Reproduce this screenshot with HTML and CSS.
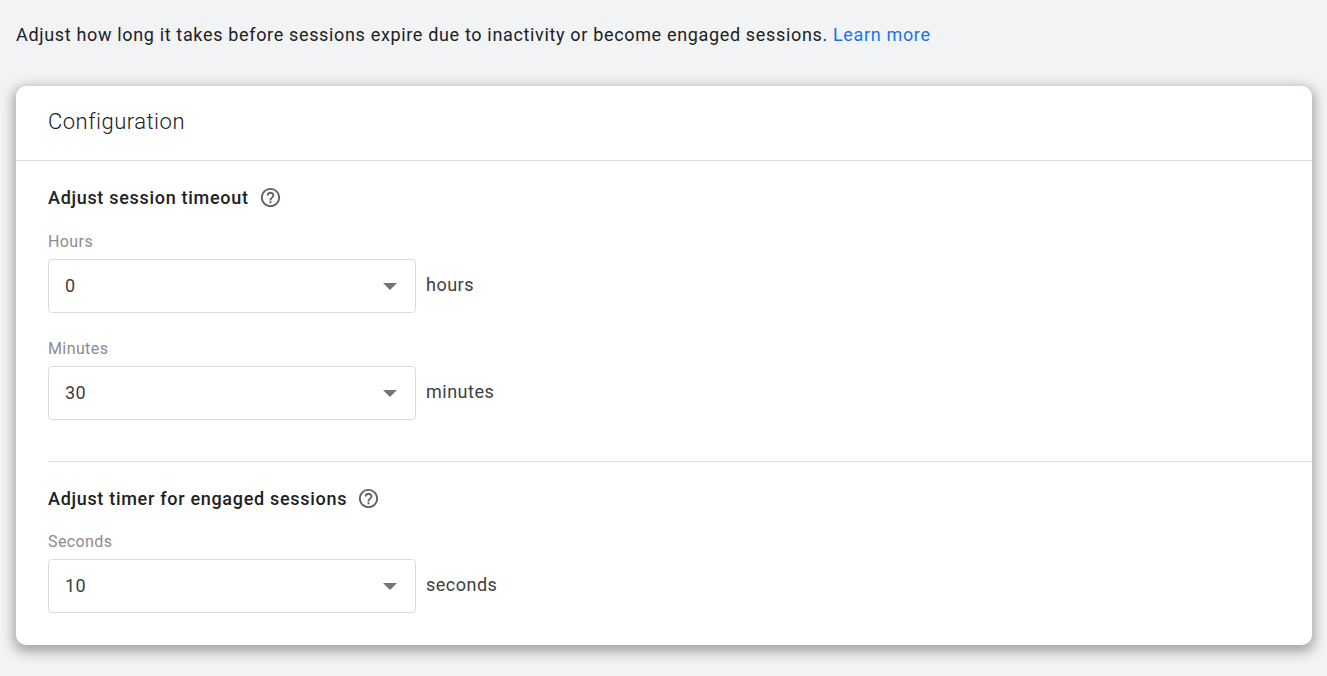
FILE: index.html
```html
<!DOCTYPE html>
<html lang="en">
<head>
<meta charset="utf-8">
<title>Session settings</title>
<link rel="stylesheet" href="styles.css">
</head>
<body>
<p class="intro">Adjust how long it takes before sessions expire due to inactivity or become engaged sessions. <a class="link" href="#">Learn more</a></p>
<main class="card">
  <h1 class="card-title">Configuration</h1>
  <section class="section first">
    <h2 class="section-title">Adjust session timeout
      <svg class="help" viewBox="0 0 24 24" width="23" height="23"><path fill="#5f6368" d="M11 18h2v-2h-2v2zm1-16C6.48 2 2 6.48 2 12s4.48 10 10 10 10-4.48 10-10S17.52 2 12 2zm0 18c-4.41 0-8-3.59-8-8s3.59-8 8-8 8 3.59 8 8-3.59 8-8 8zm0-14c-2.21 0-4 1.79-4 4h2c0-1.1.9-2 2-2s2 .9 2 2c0 2-3 1.75-3 5h2c0-2.25 3-2.5 3-5 0-2.21-1.79-4-4-4z"/></svg>
    </h2>
    <div class="field">
      <div class="label">Hours</div>
      <div class="row"><div class="select"><span>0</span><i class="caret"></i></div><span class="unit">hours</span></div>
    </div>
    <div class="field">
      <div class="label">Minutes</div>
      <div class="row"><div class="select"><span>30</span><i class="caret"></i></div><span class="unit">minutes</span></div>
    </div>
  </section>
  <section class="section second">
    <h2 class="section-title">Adjust timer for engaged sessions
      <svg class="help" viewBox="0 0 24 24" width="23" height="23"><path fill="#5f6368" d="M11 18h2v-2h-2v2zm1-16C6.48 2 2 6.48 2 12s4.48 10 10 10 10-4.48 10-10S17.52 2 12 2zm0 18c-4.41 0-8-3.59-8-8s3.59-8 8-8 8 3.59 8 8-3.59 8-8 8zm0-14c-2.21 0-4 1.79-4 4h2c0-1.1.9-2 2-2s2 .9 2 2c0 2-3 1.75-3 5h2c0-2.25 3-2.5 3-5 0-2.21-1.79-4-4-4z"/></svg>
    </h2>
    <div class="field">
      <div class="label">Seconds</div>
      <div class="row"><div class="select"><span>10</span><i class="caret"></i></div><span class="unit">seconds</span></div>
    </div>
  </section>
</main>
</body>
</html>
```
FILE: styles.css
```css
* { box-sizing: border-box; }
html, body { margin: 0; height: 100%; overflow: hidden; }
body {
  background: #f1f3f4;
  font-family: Roboto, "Liberation Sans", sans-serif;
  color: #202124;
  padding: 0 15px 0 16px;
}
.intro {
  margin: 0;
  padding-top: 23px;
  height: 86px;
  font-size: 18px;
  line-height: 23px;
  letter-spacing: 0.66px;
  color: #202124;
}
.link { color: #1a73e8; text-decoration: none; }
.card {
  background: #fff;
  border-radius: 10px;
  height: 559px;
  box-shadow: 0 4px 12px 3px rgba(60, 64, 67, 0.42);
}
.card-title {
  margin: 0;
  height: 75px;
  padding: 22px 32px 0;
  font-size: 22px;
  line-height: 28px;
  font-weight: 300;
  letter-spacing: 0.5px;
  color: #202124;
  border-bottom: 1px solid #dadce0;
}
.first { height: 300px; padding: 25px 0 0 32px; }
.second { margin-left: 32px; padding-top: 25px; border-top: 1px solid #dadce0; }
.section-title {
  display: flex;
  align-items: center;
  gap: 10px;
  margin: 0;
  height: 22px;
  font-size: 18px;
  font-weight: 500;
  letter-spacing: 0.7px;
  color: #202124;
}
.help { flex: none; }
.label {
  margin-top: 25px;
  height: 18px;
  font-size: 16px;
  line-height: 18px;
  letter-spacing: 0.4px;
  color: #8c8c8c;
}
.second .label { margin-top: 24px; }
.field + .field .label { margin-top: 27px; }
.row { display: flex; align-items: center; gap: 10px; margin-top: 8px; }
.select {
  display: flex;
  align-items: center;
  justify-content: space-between;
  width: 368px;
  height: 54px;
  padding: 0 17px 2px 16px;
  border: 1px solid #dadce0;
  border-radius: 4px;
  font-size: 18px;
  letter-spacing: 0.4px;
  color: #3c4043;
}
.caret {
  width: 0;
  height: 0;
  border-left: 7px solid transparent;
  border-right: 7px solid transparent;
  border-top: 7px solid #757575;
  margin: 2px 1px 0 0;
}
.unit { font-size: 18px; letter-spacing: 0.5px; color: #3c4043; position: relative; top: -2px; }
```
